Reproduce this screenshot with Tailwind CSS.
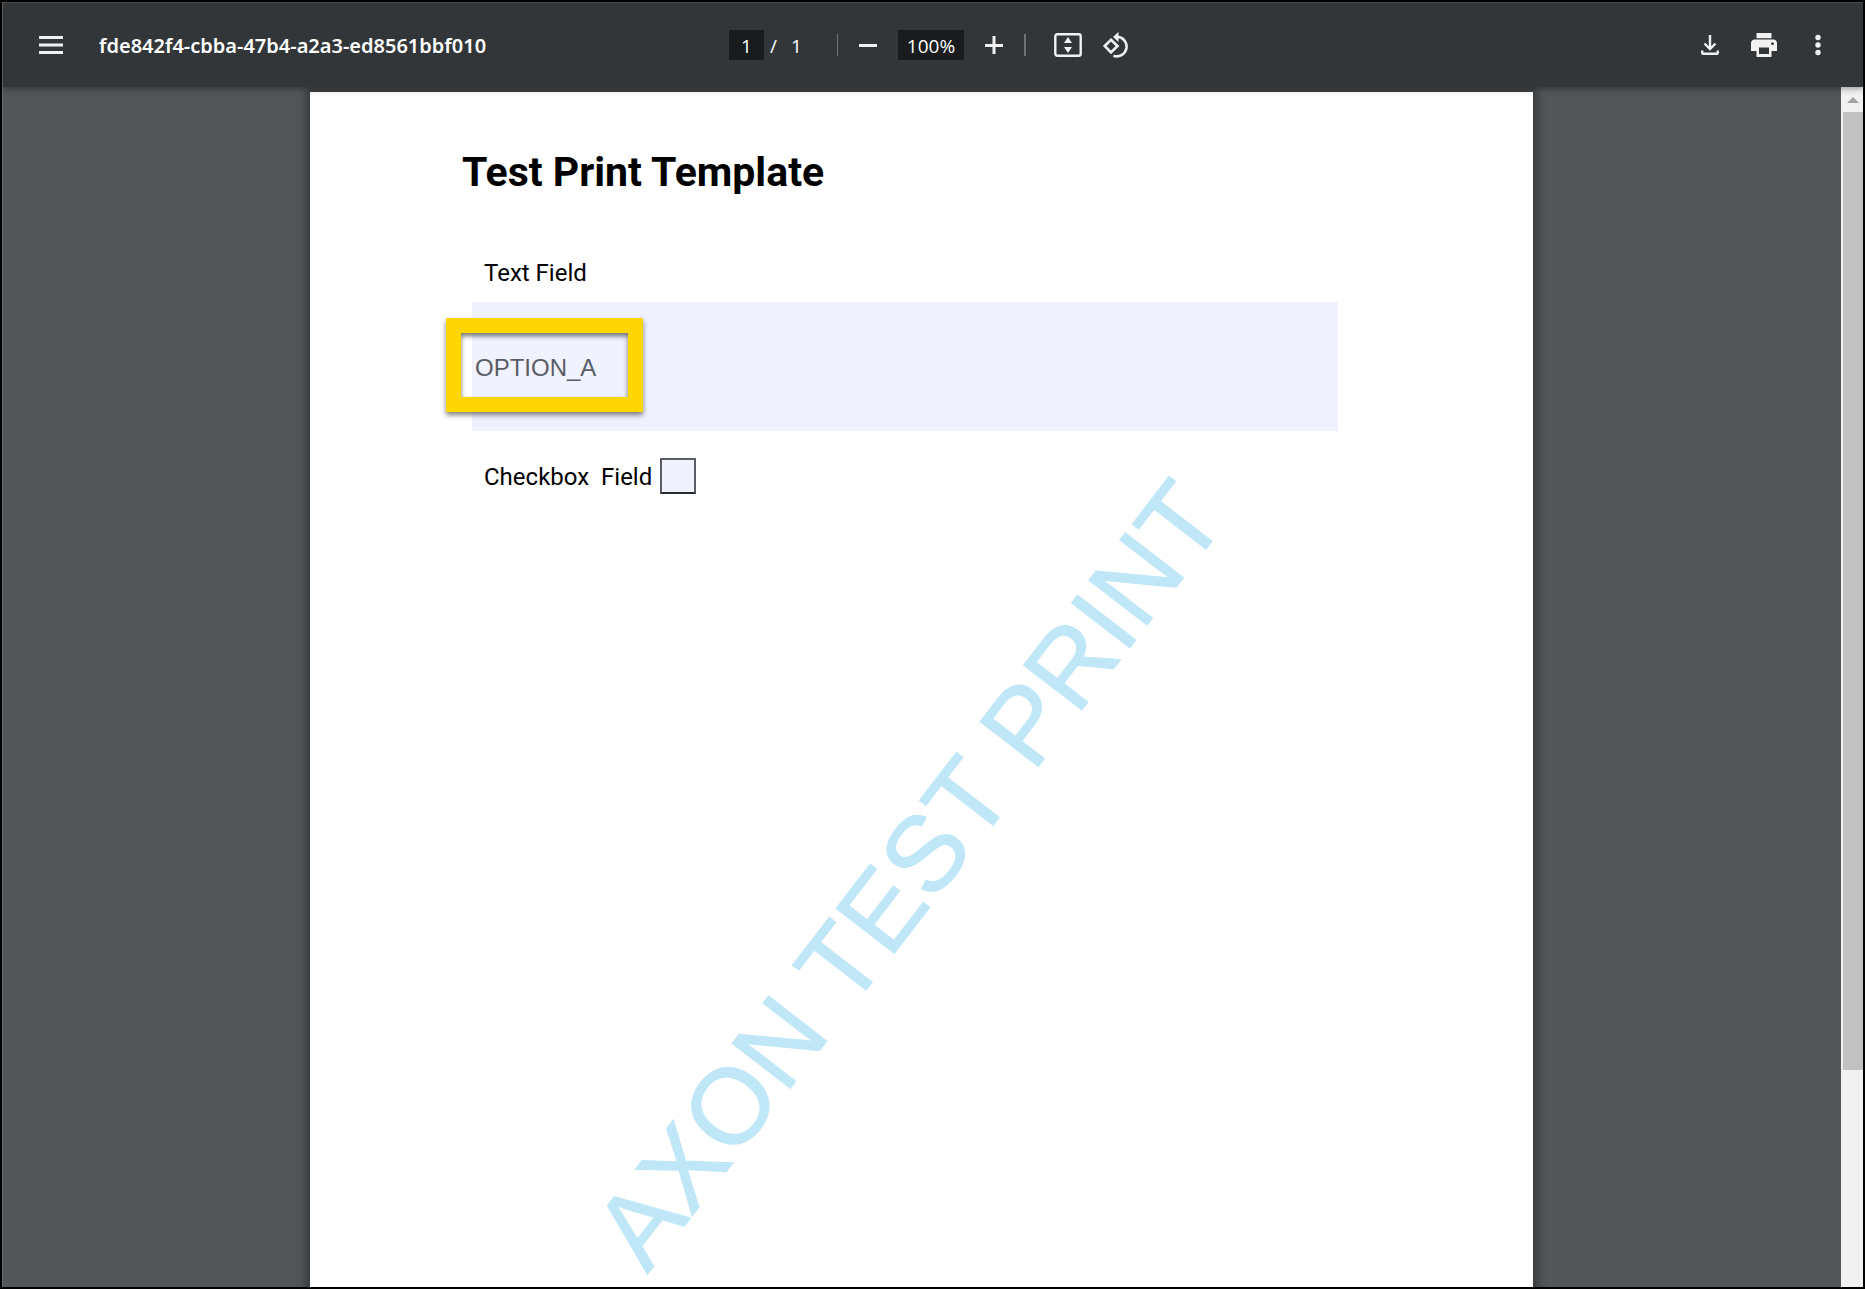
<!DOCTYPE html>
<html lang="en">
<head>
  <meta charset="UTF-8" />
  <title>fde842f4-cbba-47b4-a2a3-ed8561bbf010</title>
  <meta name="viewport" content="width=device-width, initial-scale=1.0" />
  <script src="https://cdn.jsdelivr.net/npm/@tailwindcss/browser@4"></script>
</head>
<body class="h-screen overflow-hidden bg-black p-[2px] font-['Open_Sans',sans-serif]">
  <div class="flex h-full flex-col border-l border-[#6b6b6b] bg-[#525659]">

    <!-- toolbar -->
    <header class="relative z-10 flex h-[85px] shrink-0 items-center border-t border-[#4a4a4a] bg-[#323639] text-[#f1f1f1] shadow-[0_2px_6px_rgba(0,0,0,0.35)]">
      <div class="flex flex-1 items-center gap-9 pl-9">
        <button aria-label="Menu">
          <svg class="h-[18px] w-6" viewBox="0 0 24 18" fill="currentColor"><path d="M0 0h24v3H0zM0 7.500h24v3H0zM0 15h24v3H0z"/></svg>
        </button>
        <h1 class="pt-[2px] font-['Noto_Sans','Open_Sans',sans-serif] text-[20px] font-semibold text-white">fde842f4-cbba-47b4-a2a3-ed8561bbf010</h1>
      </div>

      <div class="flex items-center pr-[10px] text-[19px] text-white">
        <input aria-label="Page number" value="1" class="h-[30px] w-[35px] bg-[#191b1c] pt-[2px] text-center" />
        <span class="ml-[6px] pt-[2px]">/</span>
        <span class="ml-[14px] w-[11px] pt-[2px]">1</span>
        <span class="ml-[35px] h-[22px] w-px bg-[#6f7275]"></span>
        <button aria-label="Zoom out" class="ml-[21px]">
          <svg class="size-[18px]" viewBox="0 0 18 18" fill="#f1f1f1"><path d="M0 8h18v3H0z"/></svg>
        </button>
        <input aria-label="Zoom level" value="100%" class="ml-[21px] h-[30px] w-[66px] bg-[#191b1c] pt-[2px] text-center" />
        <button aria-label="Zoom in" class="ml-[21px]">
          <svg class="size-[18px]" viewBox="0 0 18 18" fill="#f1f1f1"><path d="M0 8h7.500V0h3v8H18v3h-7.500v7h-3v-7H0z"/></svg>
        </button>
        <span class="ml-[21px] h-[22px] w-[2px] bg-[#6f7275]"></span>
        <button aria-label="Fit to page" class="ml-7">
          <svg class="h-6 w-7" viewBox="0 0 28 24" fill="#f1f1f1"><rect x="1.300" y="1.300" width="25.400" height="21.400" rx="2" fill="none" stroke="#f1f1f1" stroke-width="2.400"/><path d="M14 4l4 6h-8zM14 20l-4-6h8z"/></svg>
        </button>
        <button aria-label="Rotate counterclockwise" class="ml-[21px]">
          <svg class="h-[26px] w-[27px]" viewBox="0 0 27 26" fill="none" stroke="#f1f1f1" stroke-width="2.600"><path d="M8 7.800L14.500 14 8 20.500 1.700 14z"/><path d="M14.500 4.800a9.800 9.800 0 1 1-4 19"/><path d="M15.500 0v10L10 5z" fill="#f1f1f1" stroke="none"/></svg>
        </button>
      </div>

      <div class="flex flex-1 items-center justify-end gap-8 pr-[33px]">
        <button aria-label="Download">
          <svg class="h-5 w-[18px]" viewBox="0 0 18 20" fill="none" stroke="#f1f1f1" stroke-width="2.400"><path d="M9 0v14M3.500 8.500L9 14l5.500-5.500M1.200 15.500v2.300q0 1 1 1h13.600q1 0 1-1v-2.300"/></svg>
        </button>
        <button aria-label="Print">
          <svg class="h-6 w-[26px]" viewBox="0 0 26 24" fill="#f1f1f1"><path d="M5.500 0h15v5.200h-15z"/><path fill-rule="evenodd" d="M4 6.500h18a4 4 0 0 1 4 4V18h-5.500v6h-15v-6H0v-7.500a4 4 0 0 1 4-4zM8 14.500V21h10v-6.500zM21.500 9.300a1.400 1.400 0 1 0 .01 0z"/></svg>
        </button>
        <button aria-label="More actions" class="-ml-[3px]">
          <svg class="h-[22px] w-6" viewBox="0 0 24 22" fill="#f1f1f1"><circle cx="12" cy="3.500" r="2.700"/><circle cx="12" cy="11" r="2.700"/><circle cx="12" cy="18.500" r="2.700"/></svg>
        </button>
      </div>
    </header>

    <div class="flex min-h-0 flex-1">
      <main class="min-w-0 flex-1 overflow-hidden pr-px pt-[5px]">
        <!-- page -->
        <article class="relative mx-auto h-[1583px] w-[1223px] max-w-full bg-white pl-[152px] pr-[195px] pt-[56px] font-[Roboto,sans-serif] text-black shadow-[0_0_9px_4px_rgba(0,0,0,0.35)]">
          <h2 class="text-[41px] font-bold leading-[48px]">Test Print Template</h2>

          <form class="pl-[10px] pt-[62px]">
            <label for="textField" class="block pl-3 text-2xl leading-[30px]">Text Field</label>
            <div class="relative mt-[14px]">
              <input id="textField" value="OPTION_A" class="block h-[129px] w-full bg-[#f0f3ff] px-[3px] pt-[2px] font-['Liberation_Sans',Arial,sans-serif] text-2xl text-[#5b5d66]" />
              <div class="pointer-events-none absolute -left-[26px] top-4 h-[94px] w-[197px] border-[15px] border-[#ffd700] shadow-[0_3px_5px_rgba(0,0,0,0.5),inset_0_3px_5px_rgba(0,0,0,0.55)]"></div>
            </div>
            <div class="mt-[27px] flex items-center gap-2 pl-3">
              <label for="checkField" class="whitespace-pre pt-[2px] text-2xl">Checkbox  Field</label>
              <input id="checkField" type="checkbox" class="size-9 appearance-none border-2 border-[#5b5d66] border-b-[#2b2c33] bg-[#f0f3ff]" />
            </div>
          </form>

          <!-- watermark -->
          <div class="pointer-events-none absolute left-[338px] top-[1092px] origin-[0px_91px] -rotate-[52.4deg] whitespace-nowrap font-['Liberation_Sans',Arial,sans-serif] text-[107px] leading-none text-[#bfe7f8] [-webkit-text-stroke:1px_#bfe7f8]">AXON TEST PRINT</div>
        </article>
      </main>

      <!-- scrollbar -->
      <div class="flex w-[22px] flex-col bg-[#f1f1f1] pl-[2px]">
        <div class="flex h-[25px] items-center justify-center">
          <svg class="h-[6px] w-3" viewBox="0 0 12 6" fill="#a3a3a3"><path d="M6 0l6 6H0z"/></svg>
        </div>
        <div class="h-[958px] bg-[#c1c1c1]"></div>
      </div>
    </div>
  </div>
</body>
</html>
